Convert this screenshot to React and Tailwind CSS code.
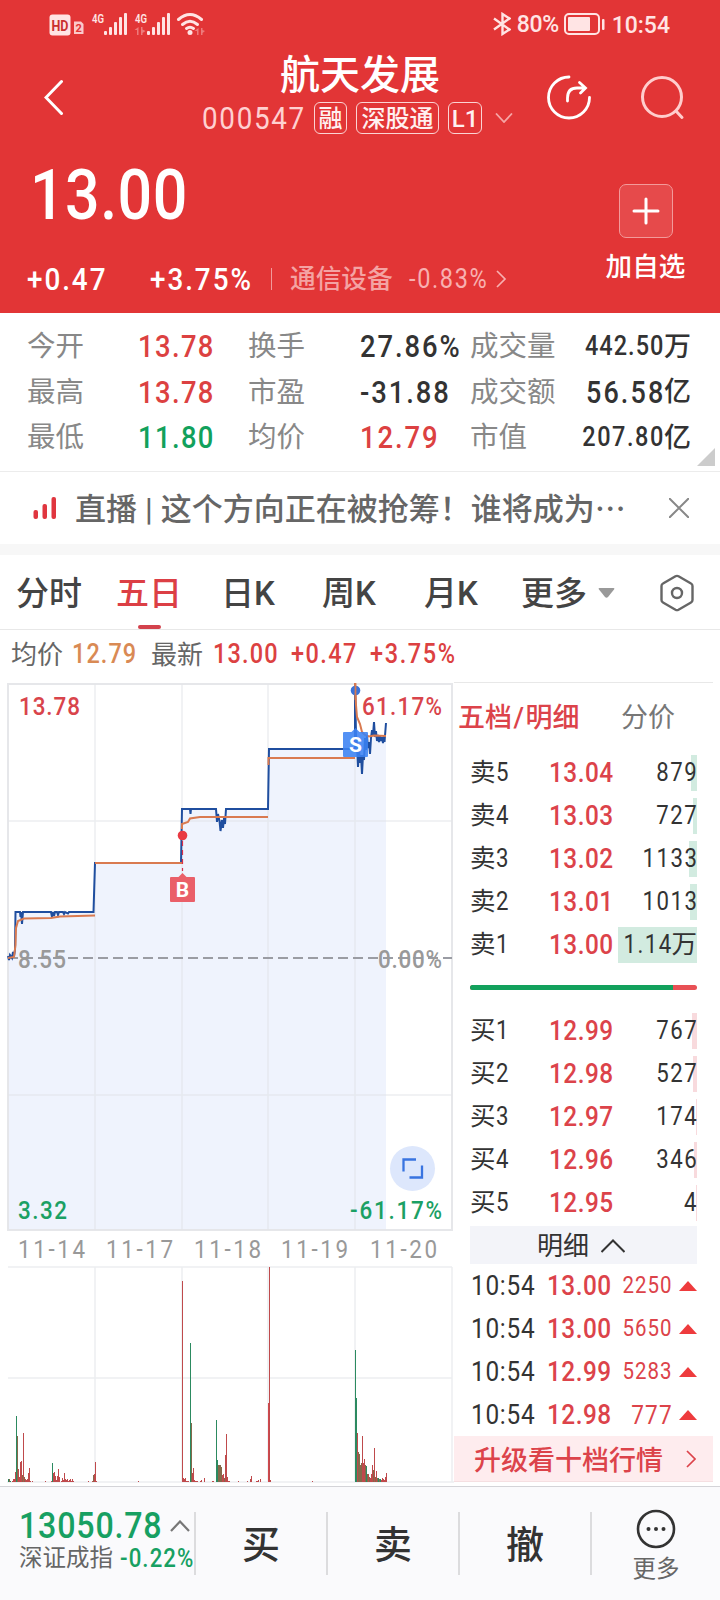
import React from "react";

const font = "font-['Roboto','Noto_Sans_CJK_SC',sans-serif]";

// Narrow, widely tracked figures
const Num = ({ children, className = "tracking-[.07em]", end = false }) => (
  <span className={`inline-block whitespace-nowrap ${end ? "origin-right" : "origin-left"} scale-x-[.87] ${className}`}>
    {children}
  </span>
);

function StatusBar() {
  return (
    <div className="flex h-12 items-center pl-[49px] pr-[50px] text-[#ffe4e4]">
      <svg width="160" height="30" viewBox="49 9 160 30" fill="currentColor">
        <rect x="49.500" y="14.500" width="21" height="21" rx="3" />
        <text x="60" y="30.500" fontSize="15" fontWeight="700" textAnchor="middle" textLength="17" lengthAdjust="spacingAndGlyphs" fill="#c9302f">HD</text>
        <path d="M74 21.500h7l2.500 2.500v10H74z" opacity=".85" />
        <text x="78.700" y="32" fontSize="11" fontWeight="700" textAnchor="middle" fill="#e23536">2</text>
        {[0, 43].map((o) => (
          <g key={o} transform={`translate(${o} 0)`}>
            <text x="92" y="22.500" fontSize="13" fontWeight="600" textLength="12" lengthAdjust="spacingAndGlyphs">4G</text>
            <rect x="104" y="31" width="3" height="4" rx="1" />
            <rect x="109" y="27" width="3" height="8" rx="1" />
            <rect x="114" y="22" width="3" height="13" rx="1" />
            <rect x="119" y="17" width="3" height="18" rx="1" />
            <rect x="124" y="13" width="3" height="22" rx="1" />
          </g>
        ))}
        <g opacity=".4">
          <path d="M138.500 27v8h-1.500v-5h-2.500zM141 27v8h1.500v-2l3-2-3-1.500v-2.500z" />
          <path d="M198.500 28v7h-1.500v-4h-2.500zM201 28v7h1.500v-2l2.500-2-2.500-1v-2z" />
        </g>
        <g fill="none" stroke="currentColor" strokeWidth="3" strokeLinecap="round">
          <path d="M178.500 19.500Q190 9.500 201.500 19.500" />
          <path d="M182.500 24.500Q190 18 197.500 24.500" />
          <path d="M186.500 28.500Q190 26 193.500 28.500" />
        </g>
        <circle cx="190" cy="32.500" r="2.500" />
      </svg>
      <div className="ml-auto flex items-center">
        <svg width="18" height="24" viewBox="0 0 18 24" fill="none" stroke="currentColor" strokeWidth="2.400">
          <path d="M1 6.500L16.500 17.500L9.500 22V2L16.500 6.500L1 17.500" />
        </svg>
        <span className="ml-[6px] mt-[2px] w-[47px] whitespace-nowrap text-[23px] font-medium leading-6 tracking-[-0.300px]">80%</span>
        <svg width="41" height="22" viewBox="0 0 41 22">
          <rect x="1" y="1" width="34" height="20" rx="4" fill="none" stroke="currentColor" strokeWidth="2" />
          <rect x="4" y="4" width="22" height="14" rx="1" fill="currentColor" />
          <rect x="38" y="6" width="2.500" height="11" rx="1" fill="currentColor" />
        </svg>
        <span className="ml-[7px] mt-[3px] text-[23px] font-medium leading-6">10:54</span>
      </div>
    </div>
  );
}

const Tag = ({ children, w }) => (
  <span className={`flex h-8 items-center justify-center rounded-[6px] border-[1.5px] border-[#fbd3d3] pt-px text-[24px] font-medium leading-none text-[#fff0f0] ${w}`}>
    {children}
  </span>
);

function Header() {
  return (
    <header className="h-[313px] bg-[#e23536] text-white">
      <StatusBar />
      <div className="flex h-[94px] items-start pl-[44px]">
        <svg className="mt-[30px]" width="20" height="40" viewBox="0 0 20 40" fill="none" stroke="currentColor" strokeWidth="3" strokeLinecap="round">
          <path d="M17.500 3.500L2 19.500L17.500 35.500" />
        </svg>
        <div className="ml-[138px] w-[316px]">
          <h1 className="pt-[6px] text-center text-[40px] font-medium leading-[44px]">航天发展</h1>
          <div className="mt-[4px] flex h-8 items-center">
            <span className="w-[112px] text-[32px] leading-none text-[#ffd0d0]"><Num className="tracking-[.06em]">000547</Num></span>
            <Tag w="w-[33px]">融</Tag>
            <Tag w="w-[83px] ml-[9px]">深股通</Tag>
            <Tag w="w-[34px] ml-[9px]">L1</Tag>
            <svg className="ml-[13px]" width="18" height="10" viewBox="0 0 18 10" fill="none" stroke="#f6a5a5" strokeWidth="1.800">
              <path d="M1 .5L9 9L17 .5" />
            </svg>
          </div>
        </div>
        <div className="ml-[26px] flex items-center gap-[47px] pt-[25px]">
          <svg width="48" height="48" viewBox="545 73 48 48" fill="none" stroke="currentColor" strokeWidth="2.800" strokeLinecap="round">
            <path d="M570 77A20.500 20.500 0 1 0 590.500 97.500" />
            <path d="M568.500 101V98Q568.500 88 578 88H586M580.500 82.500L586.500 88L581.500 93" />
          </svg>
          <svg width="46" height="48" viewBox="638.5 73 46 48" fill="none" stroke="#ffcdcd" strokeWidth="3" strokeLinecap="round">
            <circle cx="661.500" cy="97" r="19.500" />
            <path d="M675.500 111L681.500 117.500" />
          </svg>
        </div>
      </div>
      <div className="flex h-[171px] justify-between pr-[34px]">
        <div>
          <div className="ml-[30px] pt-[19px] text-[70px] font-medium leading-[68px]"><Num className="tracking-[.008em]">13.00</Num></div>
          <div className="ml-[27px] mt-[34px] flex h-8 items-center leading-none">
            <span className="w-[123px] text-[32px] font-medium"><Num>+0.47</Num></span>
            <span className="w-[121px] text-[32px] font-medium"><Num>+3.75%</Num></span>
            <span className="h-[22px] w-px bg-[#f19a9a]" />
            <span className="ml-[18px] w-[119px] pt-px text-[25.700px] font-medium text-[#f4a3a3]">通信设备</span>
            <span className="w-[86px] text-[27px] text-[#f8b0b0]"><Num>-0.83%</Num></span>
            <svg width="12" height="20" viewBox="0 0 12 20" fill="none" stroke="#f8b0b0" strokeWidth="1.700">
              <path d="M2 2L10 10L2 18" />
            </svg>
          </div>
        </div>
        <div className="flex w-[81px] flex-col items-center pt-[42px]">
          <div className="flex h-[54px] w-[54px] items-center justify-center rounded-[7px] border border-[#f39a9a] bg-[#e64a4b]">
            <svg width="28" height="28" viewBox="0 0 28 28" stroke="currentColor" strokeWidth="3" strokeLinecap="round">
              <path d="M14 2V26M2 14H26" />
            </svg>
          </div>
          <span className="mt-[14px] whitespace-nowrap text-[26.600px] font-medium leading-[30px]">加自选</span>
        </div>
      </div>
    </header>
  );
}

const stats = [
  ["今开", "13.78", "text-[#dc4141]", "换手", "27.86%", "text-[#333]", "成交量", "442.50", "万", "text-[27px]", "tracking-[.045em]"],
  ["最高", "13.78", "text-[#dc4141]", "市盈", "-31.88", "text-[#333]", "成交额", "56.58", "亿", "text-[31px]", "tracking-[.08em]"],
  ["最低", "11.80", "text-[#12a15c]", "均价", "12.79", "text-[#dc4141]", "市值", "207.80", "亿", "text-[27px]", "tracking-[.065em]"],
];

function Stats() {
  return (
    <section className="relative h-[159px] border-b border-[#ececec] pt-[11px]">
      {stats.map((s) => (
        <div key={s[0]} className="flex h-[45.600px] items-center whitespace-nowrap pl-[27px] pr-[29px] leading-none">
          <span className="w-[111px] pt-px text-[28.500px] text-[#888]">{s[0]}</span>
          <span className={`w-[110px] text-[31.500px] font-medium ${s[2]}`}><Num className="tracking-[.05em]">{s[1]}</Num></span>
          <span className="w-[112px] pt-px text-[28.500px] text-[#888]">{s[3]}</span>
          <span className={`w-[110px] text-[31.500px] font-medium ${s[5]}`}><Num>{s[4]}</Num></span>
          <span className="pt-px text-[28.500px] text-[#888]">{s[6]}</span>
          <span className="ml-auto flex items-center text-[#333]">
            <span className={s[9]}><Num end className={`font-medium ${s[10]}`}>{s[7]}</Num></span>
            <span className="-ml-px pt-px text-[27px] font-medium">{s[8]}</span>
          </span>
        </div>
      ))}
      <svg className="absolute bottom-[5px] right-[5px]" width="18" height="18" viewBox="0 0 18 18">
        <path d="M18 0V18H0z" fill="#ccc" />
      </svg>
    </section>
  );
}

function Banner() {
  return (
    <section className="flex h-[72px] items-center pl-[33px] pr-[31px]">
      <svg width="24" height="24" viewBox="0 0 24 24" fill="#e0363f">
        <rect x="0.500" y="14" width="4.500" height="9" rx="2" />
        <rect x="9.500" y="8" width="4.500" height="15" rx="2" />
        <rect x="18.500" y="1" width="4.500" height="22" rx="2" />
      </svg>
      <span lang="zh-CN" className="ml-[18px] whitespace-pre text-[31px] font-medium leading-none text-[#666]">
        直播<span className="mx-[8px]">|</span>这个方向正在被抢筹！谁将成为<span className="font-['Noto_Sans_CJK_SC']">…</span>
      </span>
      <svg className="ml-auto" width="20" height="20" viewBox="0 0 20 20" stroke="#888" strokeWidth="2">
        <path d="M0 0L20 20M20 0L0 20" />
      </svg>
    </section>
  );
}

function Tabs() {
  return (
    <nav className="flex h-[75px] items-center whitespace-nowrap border-b border-[#e8e8e8] pl-[16px] pt-[2px] text-[33px] font-medium leading-none text-[#444]">
      <span className="w-[100px]">分时</span>
      <span className="relative flex h-full w-[105px] items-center text-[#dc3f45]">
        五日
        <i className="absolute bottom-0 left-[22px] h-1 w-[23px] rounded-sm bg-[#d3424c]" />
      </span>
      <span className="w-[101px]">日K</span>
      <span className="w-[102px]">周K</span>
      <span className="w-[97px]">月K</span>
      <span className="w-[77px]">更多</span>
      <svg width="17" height="10" viewBox="0 0 17 10">
        <path d="M1.500 0h14q1.500 0 .5 1.500L10 9q-1.500 1.500-3 0L1 1.500Q0 0 1.500 0z" fill="#999" />
      </svg>
      <svg className="ml-[45px] -mt-px" width="34" height="38" viewBox="0 0 34 38" fill="none" stroke="#666" strokeWidth="2.400" strokeLinejoin="round">
        <path d="M15.500 2.300Q17 1.500 18.500 2.300L31 9.500Q32.500 10.300 32.500 12V26Q32.500 27.700 31 28.500L18.500 35.700Q17 36.500 15.500 35.700L3 28.500Q1.500 27.700 1.500 26V12Q1.500 10.300 3 9.500Z" />
        <circle cx="17" cy="19" r="5" />
      </svg>
    </nav>
  );
}

function Summary() {
  return (
    <div className="flex h-[52px] items-center whitespace-nowrap pb-[3px] pl-[11px] text-[27px] leading-none text-[#dc4141]">
      <span className="w-[61px] text-[26px] text-[#666]">均价</span>
      <span className="w-[79px] font-medium text-[#d98a54]"><Num className="tracking-[.045em]">12.79</Num></span>
      <span className="w-[62px] text-[26px] text-[#666]">最新</span>
      <span className="w-[78px] font-medium"><Num className="tracking-[.05em]">13.00</Num></span>
      <span className="w-[79px] font-medium"><Num className="tracking-[.06em]">+0.47</Num></span>
      <span className="font-medium"><Num>+3.75%</Num></span>
    </div>
  );
}

const R = "#bf4a4c";
const G = "#2c8a60";
const O = "#85694a";
// [x, height, colour] of each volume bar, in pixels
const volume = [
  [8, 3, G], [9, 3, O], [10, 1, G], [12, 1, R], [13, 3, R], [14, 3, R], [15, 10, R], [16, 66, G], [17, 46, O], [18, 13, R], [19, 5, R],
  [20, 20, R], [21, 21, R], [22, 7, O], [23, 49, R], [24, 5, O], [25, 3, R], [26, 2, R], [27, 3, R], [28, 9, R], [29, 14, R], [30, 1, R], [32, 1, R],
  [45, 1, R], [51, 1, R], [52, 19, G], [53, 9, R], [54, 10, R], [55, 6, R], [56, 2, R], [57, 6, R], [58, 13, R], [59, 5, R], [61, 1, R], [62, 4, R], [63, 2, R],
  [64, 9, R], [65, 3, R], [66, 2, R], [67, 3, R], [68, 1, R], [69, 2, R], [70, 3, R], [71, 1, R], [72, 3, R], [73, 1, R], [88, 1, R], [92, 1, R],
  [93, 7, O], [94, 8, R], [95, 20, R], [96, 1, R], [138, 1, R],
  [182, 201, R], [183, 4, R], [184, 3, R], [185, 4, R], [186, 1, R], [187, 1, R], [188, 1, R], [190, 139, G], [191, 59, O], [192, 9, R], [193, 14, R],
  [194, 2, R], [195, 1, R], [196, 1, R], [197, 1, R], [200, 1, R], [201, 2, R], [204, 4, R], [212, 1, R], [213, 1, R],
  [216, 62, G], [217, 22, G], [218, 17, O], [219, 17, O], [220, 17, O], [221, 15, O], [222, 7, R], [223, 8, R], [224, 4, O], [225, 27, R], [226, 48, R], [227, 5, R], [228, 1, R], [229, 1, R],
  [238, 1, R], [247, 1, R], [250, 3, R], [251, 6, R], [256, 1, R], [257, 1, R], [258, 2, R], [260, 3, R],
  [268, 79, "#d0494d"], [269, 215, R], [270, 2, R], [312, 1, R],
  [355, 132, G], [356, 84, G], [357, 49, R], [358, 30, O], [359, 28, O], [360, 17, O], [361, 19, O], [362, 46, R], [363, 19, R], [364, 23, R], [365, 17, O],
  [366, 16, G], [367, 8, O], [368, 8, R], [369, 5, O], [370, 4, R], [371, 8, R], [372, 17, R], [373, 12, O], [374, 34, R], [375, 5, O], [376, 11, R], [377, 4, O],
  [378, 4, G], [379, 3, O], [380, 3, G], [381, 2, R], [382, 4, R], [383, 3, R], [384, 2, R], [385, 5, R], [386, 9, R],
];

const price =
  "M8 956L9 960L10 955L12 958L13 952L14 956L15 950L15.500 912H20L20.500 917L21 912L22 924L23 912H51L52 917L53 912L54 916L55 912H57L58 915L59 912H63L64 914L65 912L68 913.500L69 912H93.500L95 863H181L182 809H190L190.500 814L191 809H216L217 822L218 814L219.500 821L220.500 831L222 820L223 828L224 818L225 824L226 809H268L269 749H355V683L356 735L357 745L358 767L359 750L360 763L361 755L362 774L363 755L364 760L365 738L366 750L367 735L368 748L369 742L370 754L371 738L372 730L373 735L374 722L375 737L376 731L377 741L378 735L379 742L380 736L381 741L382 737L383 743L384 736L384.500 742L386 723";

// Axis label squeezed horizontally to the figure style of the rest of the page
const Label = ({ x, y, w, children }) => (
  <text transform={`translate(${x} ${y}) scale(.88 1)`} textLength={w / 0.88}>{children}</text>
);

function Chart() {
  return (
    <svg className={`shrink-0 ${font}`} width="454" height="801" viewBox="0 682 454 801" fontSize="25.500">
      <path d={price + "V1230H8Z"} fill="#eff3fd" />
      <g stroke="#dfe2e8" strokeOpacity=".6" strokeWidth="1.500" fill="none">
        <path d="M95 684V1230M182 684V1230M268 684V1230M355 684V1230M8 821H452M8 1095H452" />
        <path d="M95 1267V1482M182 1267V1482M268 1267V1482M355 1267V1482M452 1267V1482M8 1267H452M8 1378H452M7 1482H454" />
        <path d="M8 684H452V1230H8Z" stroke="#e3e4e8" strokeWidth="2" strokeOpacity=".9" />
      </g>
      <path d="M8 958H452" stroke="#9a9ca3" strokeWidth="2" strokeDasharray="10 5" />
      <path d={price} fill="none" stroke="#1f4e9f" strokeWidth="2" />
      <path
        d="M8 958L14 957L15.500 945L16 928L18 921L24 918.500L51 918L60 916.500L95 915.500M95 863H182M182 829V824L188 822L190 818.500L200 817H268M268.500 765V758H355M355 683L356 705L357 717L360 724L362 732L365 735L369 736.500L374 735.500L386 736"
        fill="none"
        stroke="#d97a50"
        strokeWidth="2"
      />
      <path d="M182.500 841V871" stroke="#d8304a" strokeWidth="1.200" strokeDasharray="5 4" />
      <circle cx="182.500" cy="835.500" r="4.800" fill="#e93a42" />
      <path d="M170 878q0-1 1-1h7.500l4-4l4 4h7.500q1 0 1 1v23q0 1-1 1h-23q-1 0-1-1z" fill="#ea5f69" />
      <text x="182.500" y="896.500" textAnchor="middle" fontSize="21" fontWeight="700" fill="#fff">B</text>
      <circle cx="355.500" cy="690.500" r="4.800" fill="#3a72d8" />
      <path d="M355.500 683V700" stroke="#d97a50" strokeWidth="1.800" />
      <path d="M343 733q0-1 1-1h7.500l4-4l4 4h7.500q1 0 1 1v23q0 1-1 1h-23q-1 0-1-1z" fill="#3b82f3" fillOpacity=".88" />
      <text x="355.500" y="752" textAnchor="middle" fontSize="21" fontWeight="700" fill="#fff">S</text>
      <g fill="#d9444b" fontWeight="500">
        <Label x={19} y={715} w={61}>13.78</Label>
        <Label x={362} y={715} w={80}>61.17%</Label>
      </g>
      <g fill="#999" fontWeight="500">
        <Label x={18} y={968} w={48}>8.55</Label>
        <Label x={378} y={968} w={64}>0.00%</Label>
      </g>
      <g fill="#1ba064" fontWeight="500">
        <Label x={18} y={1219} w={49}>3.32</Label>
        <Label x={350} y={1219} w={92}>-61.17%</Label>
      </g>
      <g fill="#999">
        <Label x={18} y={1258} w={67}>11-14</Label>
        <Label x={106} y={1258} w={67}>11-17</Label>
        <Label x={194} y={1258} w={67}>11-18</Label>
        <Label x={281} y={1258} w={67}>11-19</Label>
        <Label x={370} y={1258} w={67}>11-20</Label>
      </g>
      <circle cx="412.500" cy="1168.500" r="22.500" fill="#dde7fc" />
      <path d="M403.500 1171.500V1159.500H416M422 1165.500V1177.500H409.500" fill="none" stroke="#3974e0" strokeWidth="2.300" />
      {volume.map(([x, h, c]) => (
        <rect key={x} x={x} y={1482 - h} width="1" height={h} fill={c} />
      ))}
    </svg>
  );
}

const asks = [
  ["卖", "5", "13.04", "879", "w-[6px]"],
  ["卖", "4", "13.03", "727", "w-1"],
  ["卖", "3", "13.02", "1133", "w-2"],
  ["卖", "2", "13.01", "1013", "w-[7px]"],
  ["卖", "1", "13.00", "1.14", "w-[79px]", "万"],
];
const bids = [
  ["买", "1", "12.99", "767", "w-[5px]"],
  ["买", "2", "12.98", "527", "w-1"],
  ["买", "3", "12.97", "174", "w-px"],
  ["买", "4", "12.96", "346", "w-[3px]"],
  ["买", "5", "12.95", "4", "w-px"],
];

const Level = ({ row, tint }) => (
  <div className="relative flex h-[43px] items-center whitespace-nowrap pl-[16px] pr-[16px] pt-px leading-none">
    <i className={`absolute right-4 top-1 h-9 ${tint} ${row[4]}`} />
    <span className="relative w-[79px] shrink-0 text-[25.500px] text-[#333]">{row[0]}<Num>{row[1]}</Num></span>
    <span className="relative w-[64px] shrink-0 text-[28px] font-medium text-[#dc434a]"><Num className="tracking-[.02em]">{row[2]}</Num></span>
    <span className="relative ml-auto flex shrink-0 items-center text-[25.500px] text-[#333]">
      <Num end className={row[5] ? "tracking-[.07em]" : "-mr-[.05em] tracking-[.07em]"}>{row[3]}</Num>
      {row[5] && <span className="-ml-px">{row[5]}</span>}
    </span>
  </div>
);

const ticks = [
  ["13.00", "2250"],
  ["13.00", "5650"],
  ["12.99", "5283"],
  ["12.98", "777"],
];

function OrderBook() {
  return (
    <div className="h-[801px] w-[259px] border-t border-[#e8e8e8]">
      <div className="flex h-[68px] items-center pl-1 pt-[2px] text-[27px] leading-none">
        <span className="w-[163px] font-medium text-[#dc434a]">五档<span className="mx-[1.500px]">/</span>明细</span>
        <span className="text-[#777]">分价</span>
      </div>
      {asks.map((r) => <Level key={r[1]} row={r} tint="bg-[#d2ebe0]" />)}
      <div className="my-[19px] ml-4 flex h-[5px] w-[227px] overflow-hidden rounded-sm bg-[#e85055]">
        <i className="w-[203px] bg-[#12a15c]" />
      </div>
      {bids.map((r) => <Level key={r[1]} row={r} tint="bg-[#f8dadd]" />)}
      <div className="ml-4 mt-[2px] flex h-[38px] w-[227px] items-center justify-center gap-[12px] bg-[#f3f4f9] pr-[5px] pt-px text-[26px] leading-none text-[#333]">
        明细
        <svg width="24" height="14" viewBox="0 0 24 14" fill="none" stroke="currentColor" strokeWidth="2">
          <path d="M.5 13L12 1.500L23.500 13" />
        </svg>
      </div>
      {ticks.map((t, i) => (
        <div key={i} className="flex h-[43px] items-center whitespace-nowrap pl-[17px] pr-[16px] pt-px leading-none">
          <span className="w-[76px] shrink-0 text-[28px] text-[#333]"><Num className="tracking-[.03em]">10:54</Num></span>
          <span className="w-[64px] shrink-0 text-[28px] font-medium text-[#dc434a]"><Num className="tracking-[.02em]">{t[0]}</Num></span>
          <span className={`ml-auto text-[#dc434a] ${i === 3 ? "text-[26px]" : "text-[23.500px]"}`}><Num end className="-ml-6 tracking-[.05em]">{t[1]}</Num></span>
          <svg className="ml-[6px] shrink-0" width="18" height="10" viewBox="0 0 18 10">
            <path d="M9 0L18 10H0z" fill="#ee3b3d" />
          </svg>
        </div>
      ))}
      <div className="flex h-[46px] items-center border-b border-[#f5dfe1] bg-[#feecee] pl-5 pr-[17px] pt-[5px] text-[27px] font-medium leading-none text-[#dc434a]">
        升级看十档行情
        <svg className="-mt-1 ml-auto" width="10" height="18" viewBox="0 0 10 18" fill="none" stroke="currentColor" strokeWidth="1.700">
          <path d="M1 1L9 9L1 17" />
        </svg>
      </div>
    </div>
  );
}

function Footer() {
  return (
    <footer className="flex h-[114px] items-start border-t-[1.500px] border-[#d4d4d8] bg-[#fafafc] pt-[25px] text-[#333]">
      <div className="h-[64px] w-[194px] shrink-0 whitespace-nowrap pl-[19px]">
        <div className="flex h-[27px] items-center text-[37px] font-medium leading-[27px] text-[#17a062]">
          <span className="w-[151px] shrink-0"><Num className="tracking-[.025em]">13050.78</Num></span>
          <svg className="shrink-0" width="20" height="12" viewBox="0 0 20 12" fill="none" stroke="#777" strokeWidth="2.200">
            <path d="M1 11L10 1.500L19 11" />
          </svg>
        </div>
        <div className="mt-[7px] flex items-center text-[23.500px] leading-[24px] text-[#666]">
          <span className="w-[101px] shrink-0">深证成指</span>
          <span className="w-[74px] shrink-0 text-[25.500px] font-medium text-[#17a062]"><Num className="tracking-[.05em]">-0.22%</Num></span>
        </div>
      </div>
      {["买", "卖", "撤"].map((t) => (
        <div key={t} className="flex h-[63px] w-[132px] items-center justify-center border-l-2 border-[#dcdcde] pt-[3px] text-[38px] font-medium leading-none">
          {t}
        </div>
      ))}
      <div className="flex h-[63px] w-[130px] flex-col items-center border-l-2 border-[#dcdcde]">
        <svg className="-mt-[3px] shrink-0" width="40" height="40" viewBox="0 0 40 40">
          <circle cx="20" cy="20" r="18" fill="none" stroke="#333" strokeWidth="2.600" />
          <circle cx="12.500" cy="20" r="2" fill="#333" />
          <circle cx="20" cy="20" r="2" fill="#333" />
          <circle cx="27.500" cy="20" r="2" fill="#333" />
        </svg>
        <span className="mt-[8px] text-[23.500px] leading-6 text-[#666]">更多</span>
      </div>
    </footer>
  );
}

export default function App() {
  return (
    <div lang="zh-CN" className={`h-[1600px] w-[720px] overflow-hidden bg-white ${font}`}>
      <Header />
      <Stats />
      <Banner />
      <div className="h-[11px] bg-[#f7f7f7]" />
      <Tabs />
      <Summary />
      <div className="flex h-[804px]">
        <Chart />
        <OrderBook />
      </div>
      <Footer />
    </div>
  );
}
